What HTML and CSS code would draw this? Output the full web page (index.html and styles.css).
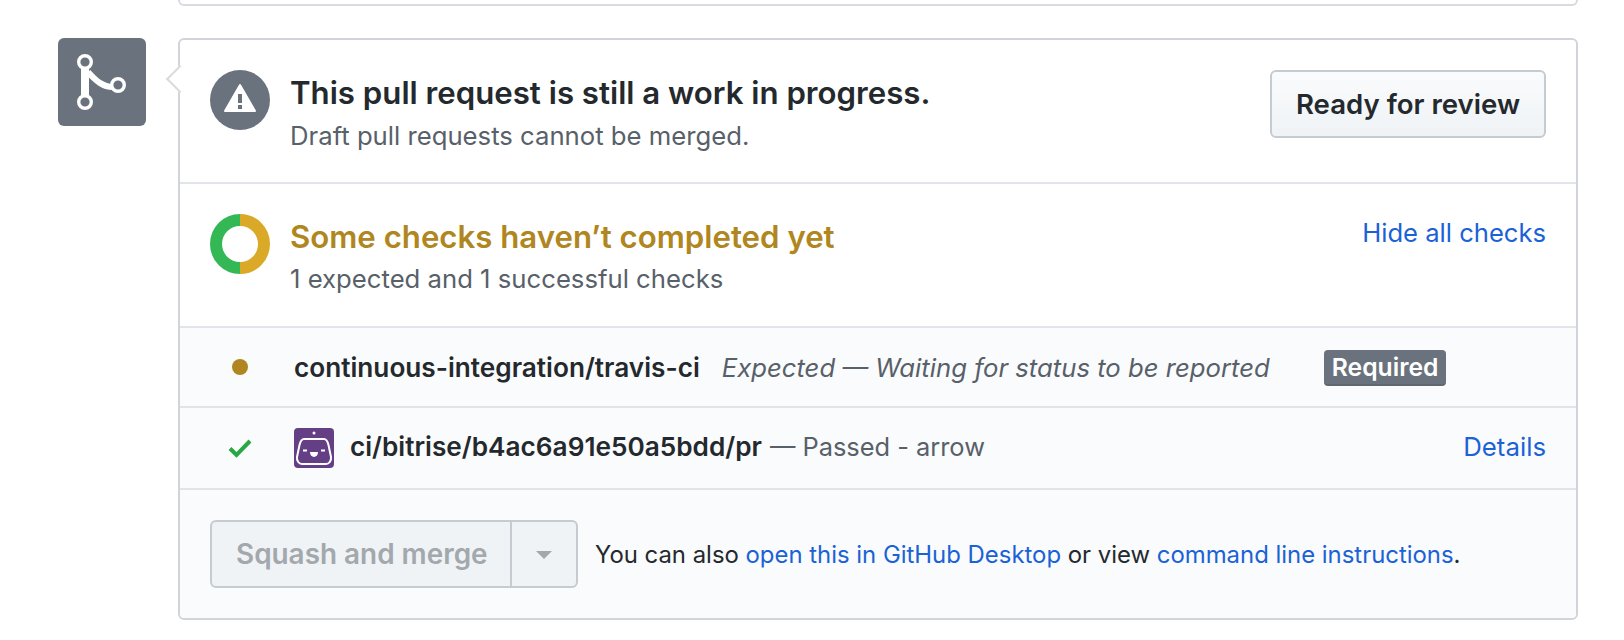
FILE: index.html
```html
<!DOCTYPE html>
<html>
<head>
    <title>Pull request merge box</title>
    <link rel="stylesheet" href="styles.css">
</head>
<body>
    <div class="previous-box"></div>

    <div class="timeline">
        <div class="merge-tile">
            <svg width="88" height="88" viewBox="0 0 88 88">
                <path d="M27 30V58" fill="none" stroke="#fff" stroke-width="8"/>
                <path d="M30 34C38 43 45 49 55 49" fill="none" stroke="#fff" stroke-width="6"/>
                <circle cx="27" cy="24" r="6.300" fill="#6a737d" stroke="#fff" stroke-width="3.400"/>
                <circle cx="27" cy="64" r="6.300" fill="#6a737d" stroke="#fff" stroke-width="3.400"/>
                <circle cx="60" cy="47" r="6.300" fill="#6a737d" stroke="#fff" stroke-width="3.400"/>
            </svg>
        </div>

        <div class="merge-box">
            <span class="caret"></span>

            <section class="section draft-section">
                <svg class="section-icon" width="60" height="60" viewBox="0 0 60 60">
                    <circle cx="30" cy="30" r="30" fill="#6a737d"/>
                    <path d="M30 15L45 41H15Z" fill="#fff" stroke="#fff" stroke-width="2" stroke-linejoin="round"/>
                    <rect x="28" y="24" width="4" height="9" fill="#6a737d"/>
                    <rect x="28" y="35" width="4" height="4" fill="#6a737d"/>
                </svg>
                <div class="section-text">
                    <h3 class="section-title">This pull request is still a work in progress.</h3>
                    <p class="section-sub">Draft pull requests cannot be merged.</p>
                </div>
                <button class="btn-review">Ready for review</button>
            </section>

            <section class="section checks-section">
                <svg class="section-icon" width="60" height="60" viewBox="0 0 60 60">
                    <path d="M30 6A24 24 0 0 0 30 54" fill="none" stroke="#34b855" stroke-width="12"/>
                    <path d="M30 6A24 24 0 0 1 30 54" fill="none" stroke="#d9a927" stroke-width="12"/>
                </svg>
                <div class="section-text">
                    <h3 class="section-title title-pending">Some checks haven’t completed yet</h3>
                    <p class="section-sub">1 expected and 1 successful checks</p>
                </div>
                <a class="link hide-checks" href="#">Hide all checks</a>
            </section>

            <div class="status-row status-expected">
                <span class="status-mark"><span class="dot"></span></span>
                <strong class="status-name">continuous-integration/travis-ci</strong>
                <em class="status-desc">Expected — Waiting for status to be reported</em>
                <span class="badge">Required</span>
            </div>

            <div class="status-row status-passed">
                <span class="status-mark">
                    <svg width="24" height="20" viewBox="0 0 24 20">
                        <path d="M2 10.5L8.5 17L22 3" fill="none" stroke="#28a745" stroke-width="4"/>
                    </svg>
                </span>
                <svg class="bitrise" width="40" height="40" viewBox="0 0 40 40">
                    <rect width="40" height="40" rx="4" fill="#643f86"/>
                    <circle cx="20" cy="5" r="1.500" fill="#fff"/>
                    <path d="M10 11H30C32.500 11 33.500 13 34.500 17L37 29C37.500 33 35 36 32 36H8C5 36 2.500 33 3 29L5.500 17C6.500 13 7.500 11 10 11Z" fill="none" stroke="#fff" stroke-width="2"/>
                    <path d="M9 22.500H13M27 22.500H31" stroke="#fff" stroke-width="2"/>
                    <path d="M16 24H24C24 30.500 16 30.500 16 24Z" fill="#fff"/>
                </svg>
                <strong class="status-name">ci/bitrise/b4ac6a91e50a5bdd/pr</strong>
                <span class="status-desc-plain">— Passed - arrow</span>
                <a class="link details-link" href="#">Details</a>
            </div>

            <div class="merge-footer">
                <div class="btn-group">
                    <span class="btn-squash">Squash and merge</span>
                    <span class="btn-arrow"><span class="arrow-down"></span></span>
                </div>
                <p class="footer-note">You can also <a class="link" href="#">open this in GitHub Desktop</a> or view <a class="link" href="#">command line instructions</a>.</p>
            </div>
        </div>
    </div>
</body>
</html>
```

FILE: styles.css
```css
html, body {
    margin: 0;
    height: 100%;
    background-color: #fff;
    color: #24292e;
    font-family: Inter, "Liberation Sans", sans-serif;
}

body {
    padding-left: 58px;
    box-sizing: border-box;
}

.previous-box {
    width: 1400px;
    margin-left: 120px;
    height: 6px;
    box-sizing: border-box;
    border: 2px solid #d8dbdf;
    border-top: none;
    border-radius: 0 0 6px 6px;
}

.timeline {
    display: flex;
    gap: 32px;
    margin-top: 32px;
}

.merge-tile {
    width: 88px;
    height: 88px;
    flex: none;
    background-color: #6a737d;
    border-radius: 6px;
}

.merge-tile svg {
    display: block;
}

.merge-box {
    position: relative;
    width: 1400px;
    height: 582px;
    box-sizing: border-box;
    display: flex;
    flex-direction: column;
    border: 2px solid #d1d5da;
    border-radius: 6px;
}

.caret {
    position: absolute;
    left: -10px;
    top: 29px;
    width: 20px;
    height: 20px;
    box-sizing: border-box;
    background-color: #fff;
    border-left: 2px solid #d8dbdf;
    border-bottom: 2px solid #d8dbdf;
    transform: rotate(45deg);
}

.section {
    display: flex;
    align-items: flex-start;
    padding: 0 30px;
    box-sizing: border-box;
}

.draft-section {
    height: 144px;
    padding-top: 30px;
    border-bottom: 2px solid #e1e4e8;
}

.checks-section {
    height: 144px;
    padding-top: 30px;
    border-bottom: 2px solid #e1e4e8;
}

.section-icon {
    flex: none;
}

.section-text {
    flex: 1;
    margin-left: 20px;
    padding-top: 3px;
}

.section-title {
    margin: 0;
    font-size: 31.200px;
    line-height: 40px;
    font-weight: 600;
}

.title-pending {
    color: #b08620;
}

.section-sub {
    margin: 5px 0 0;
    font-size: 25.700px;
    line-height: 36px;
    color: #586069;
}

.checks-section .section-sub {
    margin-top: 4px;
}

.btn-review {
    width: 276px;
    height: 68px;
    flex: none;
    padding: 0;
    border: 2px solid #c6cbd1;
    border-radius: 6px;
    background-image: linear-gradient(#fafbfc, #eff3f6);
    color: #24292e;
    font-family: inherit;
    font-size: 27.600px;
    font-weight: 600;
}

.link {
    color: #1a62d6;
    text-decoration: none;
}

.hide-checks {
    margin-top: 1px;
    font-size: 25.600px;
    line-height: 36px;
}

.status-row {
    display: flex;
    align-items: center;
    box-sizing: border-box;
    padding-right: 30px;
    background-color: #fafbfc;
    border-bottom: 2px solid #e1e4e8;
    font-size: 25.700px;
}

.status-expected {
    height: 80px;
}

.status-passed {
    height: 82px;
}

.status-passed .status-name,
.status-passed .status-desc-plain,
.status-passed .details-link {
    padding-bottom: 3px;
}

.status-mark {
    width: 114px;
    padding-left: 6px;
    box-sizing: border-box;
    display: flex;
    justify-content: center;
    flex: none;
}

.dot {
    width: 16px;
    height: 16px;
    border-radius: 50%;
    background-color: #b08620;
}

.status-name {
    font-size: 26.200px;
    font-weight: 600;
}

.status-desc {
    margin-left: 22px;
    color: #586069;
}

.badge {
    margin: 2px 0 0 54px;
    padding: 0 8px;
    height: 36px;
    line-height: 34px;
    box-sizing: border-box;
    background-color: #6a737d;
    border-bottom: 2px solid #5f6771;
    border-radius: 4px;
    color: #fff;
    font-size: 24.700px;
    font-weight: 600;
}

.bitrise {
    flex: none;
    margin-right: 16px;
}

.status-desc-plain {
    margin-left: 8px;
    font-size: 25.400px;
    color: #586069;
}

.details-link {
    margin-left: auto;
    font-size: 25.800px;
}

.merge-footer {
    flex: 1;
    display: flex;
    align-items: center;
    padding: 0 30px;
    background-color: #fafbfc;
    border-radius: 0 0 6px 6px;
}

.btn-group {
    display: flex;
    height: 68px;
    flex: none;
    box-sizing: border-box;
    border: 2px solid #c6cbd1;
    border-radius: 6px;
    background-color: #eff3f6;
}

.btn-squash {
    width: 300px;
    padding-left: 24px;
    box-sizing: border-box;
    line-height: 64px;
    border-right: 2px solid #c6cbd1;
    color: #a3a8ad;
    font-size: 27.900px;
    font-weight: 600;
}

.btn-arrow {
    width: 64px;
    display: flex;
    align-items: center;
    justify-content: center;
}

.arrow-down {
    width: 0;
    height: 0;
    margin-top: 2px;
    border: 8px solid transparent;
    border-top-color: #a3a8ad;
    border-bottom: none;
}

.footer-note {
    margin: 0 0 0 17px;
    font-size: 23.900px;
    color: #24292e;
}
```
